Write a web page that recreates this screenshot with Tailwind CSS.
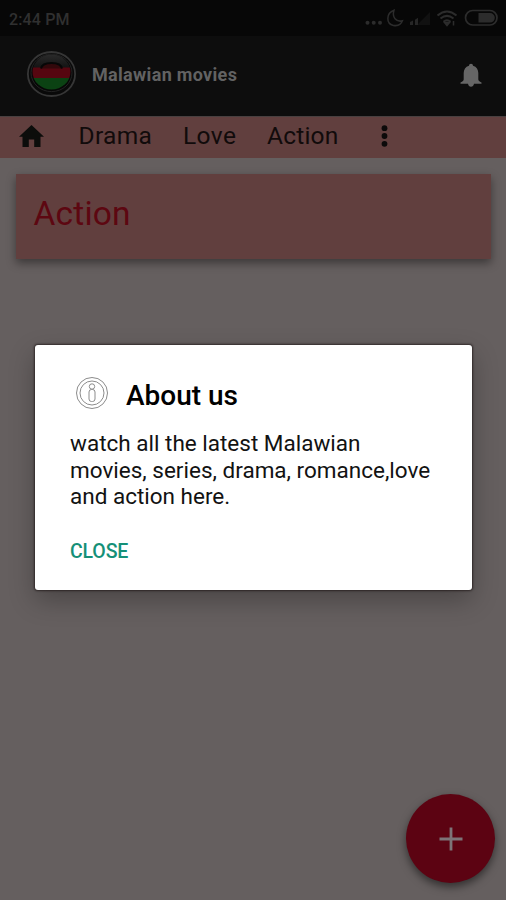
<!DOCTYPE html>
<html lang="en">
<head>
<meta charset="utf-8">
<title>Malawian movies</title>
<script src="https://cdn.jsdelivr.net/npm/@tailwindcss/browser@4"></script>
</head>
<body class="relative flex h-[900px] w-[506px] flex-col overflow-hidden bg-[#655f5f] font-[Roboto,sans-serif]">
  <div class="flex h-9 shrink-0 items-center justify-between bg-[#070707] pr-[7px] pl-[9px] text-[#303030]">
    <span class="text-[16px] leading-none font-medium tracking-[0.15px] pt-[3px]">2:44 PM</span>
    <svg class="h-9 w-[136px]" viewBox="363 0 136 36" fill="none" stroke="#2c2c2c" stroke-width="1.5">
      <g fill="#2c2c2c" stroke="none"><circle cx="367.5" cy="22.7" r="2"/><circle cx="373.7" cy="22.7" r="2"/><circle cx="380" cy="22.7" r="2"/></g>
      <path d="M394 10.200c-8 2.800-8.200 13.600-.6 15.200 4.200.8 7.600-1 9-4.600-6.200 1.600-10.600-3.600-8.400-10.600z"/>
      <path d="M430 12v13h-13z" fill="#111" stroke="none"/>
      <path d="M410 24.900v-3l3-1.500v4.500zM415 24.900v-5.200l3-2v7.200z" fill="#262626" stroke="none"/>
      <path d="M437.500 15.500q9.500-8 19 0M440.500 18.600q6.500-5.500 13 0M443.500 21.700q3.500-3 7 0" stroke-width="2"/>
      <path d="M444.500 22.500h5l-2.500 3zM453.500 21v4.500" fill="#2c2c2c"/>
      <rect x="465.500" y="10.500" width="31.500" height="14.500" rx="7.200" stroke-width="1.700"/>
      <path d="M478.500 13h11.500a4.800 4.800 0 0 1 0 9.600h-11.500z" fill="#2c2c2c" stroke="none"/>
    </svg>
  </div>
  <header class="flex h-20 shrink-0 items-center bg-[#0d0d0d] pr-[23.5px] pl-[26px]">
    <svg class="-mt-1 h-[50px] w-[52px] shrink-0" viewBox="0 0 52 50">
      <defs>
        <clipPath id="flag"><ellipse cx="25.500" cy="23" rx="19" ry="17.500"/></clipPath>
        <linearGradient id="gloss" x1="0" y1="0" x2="0" y2="1"><stop offset="0" stop-color="#343434"/><stop offset="1" stop-color="#111"/></linearGradient>
      </defs>
      <ellipse cx="25.500" cy="25" rx="23.600" ry="22" fill="#090909" stroke="#363636" stroke-width="1.800"/>
      <ellipse cx="25.500" cy="23.800" rx="20.500" ry="18.800" fill="#070707" stroke="#232323" stroke-width="1"/>
      <g clip-path="url(#flag)">
        <path fill="url(#gloss)" d="M0 0h52v20H0z"/>
        <path fill="#560610" d="M0 18.500h52v10.500H0z"/>
        <path fill="#0b4213" d="M0 29h52v16H0z"/>
        <path d="M15 19.500q1-5.500 10.500-5.500T36 19.500" fill="#32080b" stroke="#070707" stroke-width="2"/>
      </g>
    </svg>
    <h1 class="-mt-[3px] ml-[14px] text-[18px] leading-none font-bold tracking-[0.32px] text-[#626262]">Malawian movies</h1>
    <svg class="-mt-0.5 ml-auto h-[25px] w-[24px]" viewBox="0 0 24 25" fill="#666"><path d="M12 .8c1.200 0 2 .8 2 1.900 3.600 1 5.300 4 5.300 7.400v6.200c0 1.600 1 2.200 3.200 3.300v1.200H15c-.3 1.900-1.500 3-3 3s-2.700-1.100-3-3H1.500v-1.200c2.200-1.100 3.200-1.700 3.200-3.300v-6.200c0-3.400 1.700-6.400 5.300-7.400 0-1.100.8-1.900 2-1.900z"/></svg>
  </header>
  <nav class="flex h-[42px] shrink-0 items-center border-t border-[#494040] bg-[#613f3e] pb-[2px] pl-[19px] text-[24.5px] leading-none text-[#110b0b]">
    <svg class="-mt-px h-[22px] w-[25px]" viewBox="0 0 25 22" fill="#0c0d0b"><path d="M12.500 0 25 11.800h-3.500V22h-6.300v-7.500H9.800V22H3.500V11.800H0z"/></svg>
    <span class="ml-[34.5px] w-[104.5px] tracking-[0.35px]">Drama</span>
    <span class="w-[84px] tracking-[0.4px]">Love</span>
    <span class="w-[114px] tracking-[0.2px]">Action</span>
    <svg class="-mt-px h-[22px] w-[7px]" viewBox="0 0 7 22" fill="#0c0a0a"><circle cx="3.500" cy="3.200" r="2.900"/><circle cx="3.500" cy="11" r="2.900"/><circle cx="3.500" cy="18.800" r="2.900"/></svg>
  </nav>
  <main class="flex-1 px-4 pt-4">
    <section class="flex h-[85px] w-[475px] items-center bg-[#613f3e] pb-[5px] pl-[17.5px] shadow-[0_4px_9px_rgba(0,0,0,0.42)]">
      <h2 class="text-[33.5px] leading-none tracking-[0.2px] text-[#5d0711]">Action</h2>
    </section>
  </main>

  <div role="dialog" class="absolute top-[345px] left-[35px] h-[245px] w-[437px] rounded-[3px] bg-white pt-[29px] pl-[35px] text-[#121212] shadow-[0_0_2px_1px_rgba(20,10,10,0.6),0_10px_26px_rgba(0,0,0,0.28)]">
    <div class="flex h-10 items-center">
      <svg class="-mt-0.5 ml-[5px] h-[34px] w-[34px]" viewBox="0 0 34 34" fill="none" stroke="#8c8c8c"><circle cx="17" cy="17" r="15.500"/><circle cx="17" cy="17" r="12"/><circle cx="17" cy="10.500" r="2.700"/><rect x="14" y="13.500" width="6" height="12" rx="2.500"/></svg>
      <h3 class="ml-[17px] pt-[3px] text-[28px] leading-none font-medium text-black">About us</h3>
    </div>
    <p class="mt-[16px] text-[22.5px] leading-[26.7px] whitespace-nowrap">watch all the latest Malawian<br>movies, series, drama, romance,love<br>and action here.</p>
    <button class="mt-[30px] block text-[19.5px] leading-[24px] font-medium tracking-[-0.15px] text-[#159078]">CLOSE</button>
  </div>

  <button aria-label="Add" class="absolute top-[794px] left-[406px] flex h-[89px] w-[89px] items-center justify-center rounded-full bg-[#5c0312] shadow-[0_4px_8px_rgba(0,0,0,0.5)]">
    <svg class="h-6 w-6" viewBox="0 0 24 24" stroke="#7d7478" stroke-width="2.800"><path d="M12 .5v23M.5 12h23"/></svg>
  </button>
</body>
</html>
